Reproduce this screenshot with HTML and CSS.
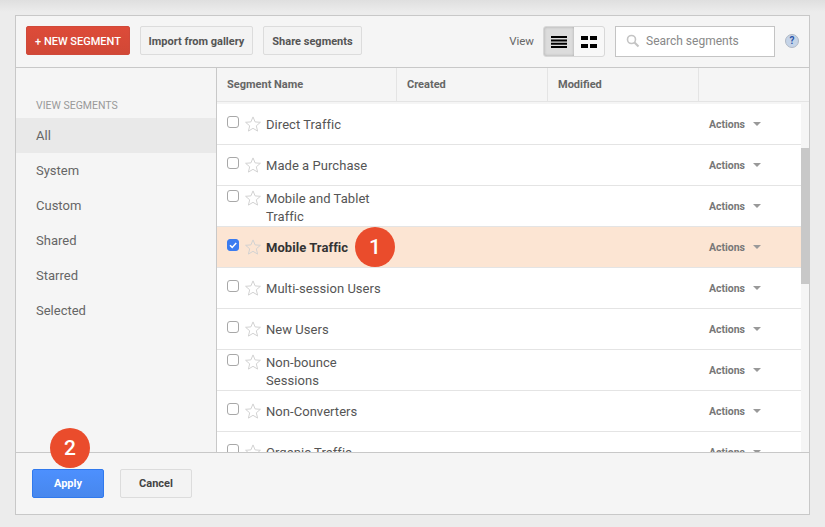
FILE: index.html
```html
<!DOCTYPE html>
<html lang="en">
<head>
<meta charset="utf-8">
<title>Segments</title>
<link rel="stylesheet" href="styles.css">
</head>
<body>
<svg class="defs" width="0" height="0" aria-hidden="true">
  <symbol id="star" viewBox="0 0 16 16"><path d="M8 .9l2.1 5 5.3.4-4.1 3.5 1.3 5.3L8 12.3l-4.6 2.8 1.3-5.3L.6 6.3l5.3-.4z" fill="none" stroke="#d2d2d2" stroke-width="1"/></symbol>
</svg>
<main class="panel">
  <header class="toolbar">
    <button class="btn btn-red">+ NEW SEGMENT</button>
    <button class="btn btn-grey btn-import">Import from gallery</button>
    <button class="btn btn-grey btn-share">Share segments</button>
    <span class="view-label">View</span>
    <div class="view-toggle">
      <span class="view-opt view-on">
        <svg width="16" height="12" viewBox="0 0 16 12"><path d="M0 0h16v2H0zM0 3.4h16v2H0zM0 6.8h16v2H0zM0 10h16v2H0z" fill="#000"/></svg>
      </span>
      <span class="view-opt">
        <svg width="16" height="12" viewBox="0 0 16 12"><path d="M0 0h7v4H0zM9 0h7v4H9zM0 8h7v4H0zM9 8h7v4H9z" fill="#000"/></svg>
      </span>
    </div>
    <div class="search">
      <svg width="14" height="14" viewBox="0 0 14 14"><circle cx="5.5" cy="5.5" r="4" fill="none" stroke="#c4c4c4" stroke-width="1.6"/><path d="M8.5 8.5l4 4" stroke="#c4c4c4" stroke-width="2.2"/></svg>
      <span>Search segments</span>
    </div>
    <span class="help">?</span>
  </header>
  <div class="body">
    <nav class="sidebar">
      <div class="side-title">VIEW SEGMENTS</div>
      <div class="side-item side-active">All</div>
      <div class="side-item">System</div>
      <div class="side-item">Custom</div>
      <div class="side-item">Shared</div>
      <div class="side-item">Starred</div>
      <div class="side-item">Selected</div>
    </nav>
    <section class="table">
      <div class="thead">
        <div class="th th-name">Segment Name</div>
        <div class="th th-date">Created</div>
        <div class="th th-date">Modified</div>
        <div class="th th-end"></div>
      </div>
      <div class="list">
        <div class="rows">
          <div class="row"><span class="check"></span><svg class="star"><use href="#star"/></svg><span class="name">Direct Traffic</span><span class="actions">Actions<i class="caret"></i></span></div>
          <div class="row"><span class="check"></span><svg class="star"><use href="#star"/></svg><span class="name">Made a Purchase</span><span class="actions">Actions<i class="caret"></i></span></div>
          <div class="row row-two"><span class="check"></span><svg class="star"><use href="#star"/></svg><span class="name">Mobile and Tablet Traffic</span><span class="actions">Actions<i class="caret"></i></span></div>
          <div class="row row-on"><span class="check check-on"><svg width="10" height="10" viewBox="0 0 10 10"><path d="M2 5.2l2.2 2.2L8.2 3" fill="none" stroke="#fff" stroke-width="1.5"/></svg></span><svg class="star"><use href="#star"/></svg><span class="name">Mobile Traffic</span><span class="actions">Actions<i class="caret"></i></span></div>
          <div class="row"><span class="check"></span><svg class="star"><use href="#star"/></svg><span class="name">Multi-session Users</span><span class="actions">Actions<i class="caret"></i></span></div>
          <div class="row"><span class="check"></span><svg class="star"><use href="#star"/></svg><span class="name">New Users</span><span class="actions">Actions<i class="caret"></i></span></div>
          <div class="row row-two"><span class="check"></span><svg class="star"><use href="#star"/></svg><span class="name">Non-bounce Sessions</span><span class="actions">Actions<i class="caret"></i></span></div>
          <div class="row"><span class="check"></span><svg class="star"><use href="#star"/></svg><span class="name">Non-Converters</span><span class="actions">Actions<i class="caret"></i></span></div>
          <div class="row"><span class="check"></span><svg class="star"><use href="#star"/></svg><span class="name">Organic Traffic</span><span class="actions">Actions<i class="caret"></i></span></div>
        </div>
        <div class="track"><div class="thumb"></div></div>
      </div>
    </section>
  </div>
  <footer class="footer">
    <button class="btn btn-blue">Apply</button>
    <button class="btn btn-cancel">Cancel</button>
  </footer>
  <span class="badge badge-1">1</span>
  <span class="badge badge-2">2</span>
</main>
</body>
</html>
```
FILE: styles.css
```css
* { box-sizing: border-box; }
html, body { margin: 0; height: 100%; }
body {
  background: linear-gradient(#dfdfdf 0, #ececec 12px);
  font-family: Roboto, "Liberation Sans", sans-serif;
  padding: 15px 15px 0 15px;
  overflow: hidden;
  -webkit-font-smoothing: antialiased;
}
.defs { position: absolute; }
.panel {
  position: relative;
  width: 795px;
  height: 500px;
  background: #f5f5f5;
  border: 1px solid #c8c8c8;
  display: flex;
  flex-direction: column;
}
.toolbar {
  height: 52px;
  flex: none;
  border-bottom: 1px solid #c8c8c8;
  display: flex;
  align-items: flex-start;
  padding: 10px 0 0 10px;
}
.btn {
  font-family: inherit;
  font-weight: 700;
  font-size: 11px;
  height: 29px;
  border-radius: 2px;
  padding: 1px 0 0;
  border: 1px solid #dcdcdc;
}
.btn-red {
  width: 104px;
  background: linear-gradient(#dd4b39, #d14836);
  border-color: #d0493a;
  color: #fff;
  font-size: 11px;
  font-weight: 500;
}
.btn-grey {
  background: #f3f3f3;
  color: #555;
  margin-left: 10px;
}
.btn-import { width: 113px; }
.btn-share { width: 99px; }
.view-label {
  margin-left: auto;
  font-size: 11.5px;
  color: #666;
  margin-right: 9px;
  line-height: 30px;
}
.view-toggle {
  display: flex;
  width: 62px;
  height: 31px;
  border: 1px solid #d8d8d8;
  border-radius: 3px;
  background: #f8f8f8;
}
.view-opt {
  flex: 1;
  display: flex;
  align-items: center;
  justify-content: center;
}
.view-on {
  flex: none;
  width: 30px;
  background: #dcdcdc;
  border-radius: 2px 0 0 2px;
  box-shadow: inset 0 0 3px #aaa;
}
.search {
  width: 160px;
  height: 31px;
  margin-left: 10px;
  background: #fff;
  border: 1px solid #c4c4c4;
  display: flex;
  align-items: center;
  padding: 0 0 1px 10px;
  font-size: 12px;
  color: #888;
}
.search span { margin-left: 6px; }
.help {
  width: 14px;
  height: 14px;
  margin: 8px 10px 0 10px;
  border-radius: 50%;
  background: #c5d4e8;
  border: 1px solid #b0b8c4;
  color: #2a55a8;
  font-size: 10px;
  font-weight: 700;
  line-height: 12px;
  text-align: center;
}
.body { flex: 1; display: flex; min-height: 0; }
.sidebar {
  width: 201px;
  flex: none;
  border-right: 1px solid #c8c8c8;
  padding-top: 31px;
}
.side-title {
  font-size: 10.5px;
  color: #999;
  padding-left: 20px;
  height: 19px;
  line-height: 13px;
}
.side-item {
  height: 35px;
  line-height: 35px;
  padding-left: 20px;
  font-size: 13px;
  color: #666;
}
.side-active { background: #e9e9e9; }
.table { flex: 1; min-width: 0; display: flex; flex-direction: column; }
.thead {
  height: 34px;
  flex: none;
  display: flex;
  border-bottom: 1px solid #e4e4e4;
}
.th {
  font-size: 11px;
  font-weight: 700;
  color: #666;
  line-height: 34px;
  padding-left: 10px;
  border-right: 1px solid #e4e4e4;
}
.th-name { width: 180px; }
.th-date { width: 151px; }
.th-end { flex: 1; border-right: 0; }
.list {
  flex: 1;
  min-height: 0;
  display: flex;
  overflow: hidden;
  padding-top: 2px;
}
.rows { flex: 1; min-width: 0; background: #fff; }
.track { width: 8px; flex: none; background: #f5f5f5; position: relative; padding-top: 44px; }
.thumb { height: 136px; background: #c8c8c8; }
.row {
  height: 41px;
  border-bottom: 1px solid #e4e4e4;
  display: flex;
  align-items: center;
  padding-left: 10px;
  font-size: 13px;
  color: #555;
  letter-spacing: .05px;
}
.row-two { align-items: flex-start; }
.row-on { background: #fce5d3; color: #333; font-weight: 700; }
.check {
  width: 12px;
  height: 12px;
  flex: none;
  border: 1px solid #a8a8a8;
  border-radius: 3px;
  background: #fff;
  margin: 0 6px 5px 0;
  display: flex;
  align-items: center;
  justify-content: center;
}
.check-on { background: #3b7cf0; border-color: #3b7cf0; }
.star { width: 16px; height: 16px; flex: none; margin-right: 5px; }
.name { width: 125px; flex: none; line-height: 18px; margin-top: 2px; }
.row-two .check { margin-top: 4px; }
.row-two .star { margin-top: 4px; }
.row-two .name { margin-top: 4px; }
.row-two .actions { align-self: center; }
.row-on .name { width: auto; }
.actions {
  margin-left: auto;
  margin-right: 40px;
  font-size: 10.5px;
  font-weight: 700;
  color: #777;
  display: flex;
  align-items: center;
  letter-spacing: 0;
}
.caret {
  width: 0;
  height: 0;
  margin-left: 8px;
  border: 4px solid transparent;
  border-top: 4px solid #999;
  border-bottom: 0;
}
.footer {
  height: 62px;
  flex: none;
  background: #f5f5f5;
  border-top: 1px solid #c8c8c8;
  display: flex;
  align-items: flex-start;
  padding: 16px 0 0 16px;
  gap: 16px;
}
.footer .btn { padding: 0; }
.btn-blue {
  width: 72px;
  background: linear-gradient(#4d90fe, #4787ed);
  border-color: #3079ed;
  color: #fff;
}
.btn-cancel { width: 72px; background: #f3f3f3; color: #444; }
.badge {
  position: absolute;
  width: 40px;
  height: 40px;
  border-radius: 50%;
  background: #ea4c2c;
  color: #fff;
  font-size: 21px;
  font-weight: 500;
  line-height: 40px;
  text-align: center;
  z-index: 2;
}
.badge-1 { left: 339px; top: 211px; }
.badge-2 { left: 34px; top: 412px; }
```
